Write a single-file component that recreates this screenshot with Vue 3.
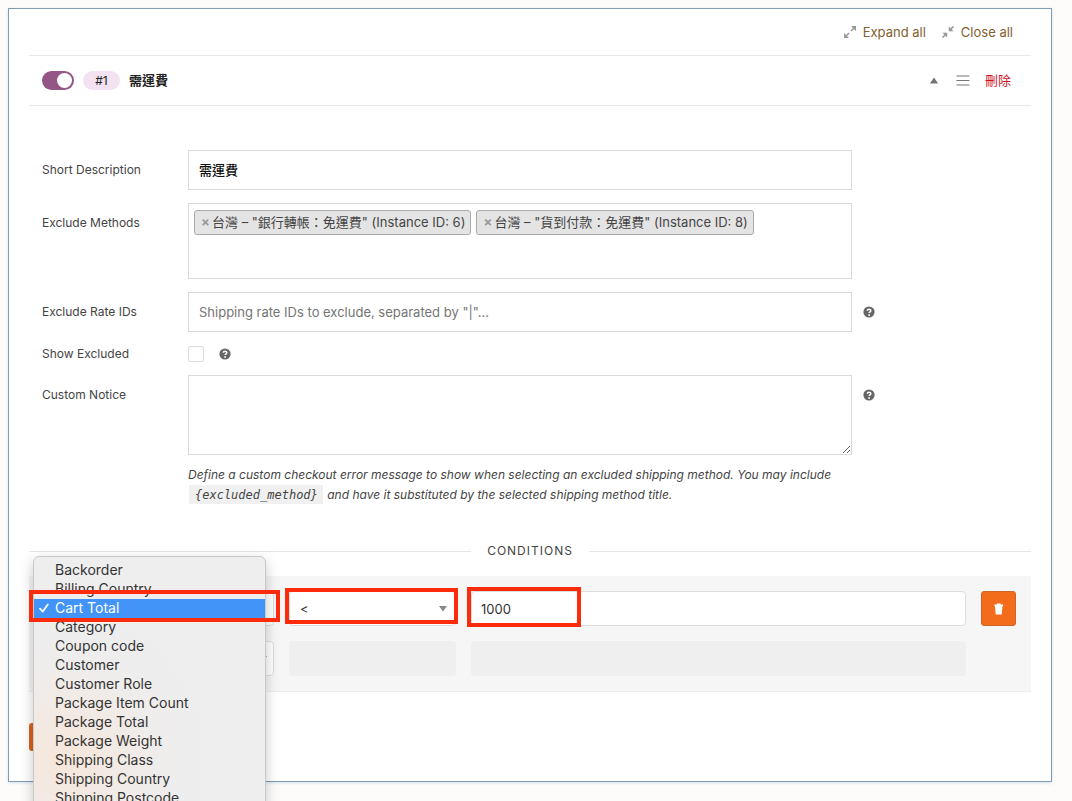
<script setup>
import { ref } from 'vue'

const enabled = ref(true)
const description = ref('需運費')
const rateIds = ref('')
const showExcluded = ref(false)
const notice = ref('')
const operator = ref('<')
const amount = ref('1000')
const selected = ref('Cart Total')

const methods = [
  '台灣 – "銀行轉帳：免運費" (Instance ID: 6)',
  '台灣 – "貨到付款：免運費" (Instance ID: 8)',
]

const options = [
  'Backorder', 'Billing Country', 'Cart Total', 'Category', 'Coupon code',
  'Customer', 'Customer Role', 'Package Item Count', 'Package Total',
  'Package Weight', 'Shipping Class', 'Shipping Country', 'Shipping Postcode',
]
</script>

<template>
  <div class="page">
    <main class="panel">
      <div class="toolbar">
        <a href="#" class="tool">
          <svg width="12" height="12" viewBox="0 0 12 12" aria-hidden="true">
            <path d="M7 0H12V5ZM0 7L5 12H0Z" fill="#999" />
            <path d="M10 2L7 5M2 10L5 7" stroke="#999" stroke-width="1.5" />
          </svg>
          <span>Expand all</span>
        </a>
        <a href="#" class="tool">
          <svg width="12" height="12" viewBox="0 0 12 12" aria-hidden="true">
            <path d="M6.8 .4V5.2H11.6ZM.4 6.8H5.2V11.6Z" fill="#999" />
            <path d="M8.4 3.6L11.6 .4M3.6 8.4L.4 11.6" stroke="#999" stroke-width="1.5" />
          </svg>
          <span>Close all</span>
        </a>
      </div>

      <header class="rule-head">
        <label class="switch">
          <input v-model="enabled" type="checkbox" aria-label="Enable rule" />
        </label>
        <span class="badge">#1</span>
        <h2 class="title">需運費</h2>
        <button class="icon-btn" type="button" aria-label="Collapse">
          <svg width="10" height="8" viewBox="0 0 10 8"><path d="M5 .4L9.2 6.4H.8Z" fill="#777" /></svg>
        </button>
        <button class="icon-btn handle" type="button" aria-label="Reorder">
          <svg width="14" height="12" viewBox="0 0 14 12"><path d="M.4 1H13.4M.4 5.5H13.4M.4 10H13.4" stroke="#777" stroke-width="1.2" /></svg>
        </button>
        <a href="#" class="delete">刪除</a>
      </header>

      <form class="fields" @submit.prevent>
        <div class="field">
          <label for="desc">Short Description</label>
          <input id="desc" v-model="description" class="text strong" type="text" />
        </div>
        <div class="field">
          <span id="methods-label" class="label">Exclude Methods</span>
          <ul class="chips" aria-labelledby="methods-label">
            <li v-for="m in methods" :key="m" class="chip">
              <button type="button" aria-label="Remove">×</button>{{ m }}
            </li>
          </ul>
        </div>
        <div class="field">
          <label for="rates">Exclude Rate IDs</label>
          <input id="rates" v-model="rateIds" class="text" type="text" placeholder="Shipping rate IDs to exclude, separated by &quot;|&quot;..." />
          <span class="help">
            <svg width="12" height="12" viewBox="0 0 12 12"><circle cx="6" cy="6" r="5.6" fill="#666" /><path d="M4.3 4.8C4.3 2.7 7.8 2.7 7.8 4.7C7.8 5.8 6.1 5.8 6.1 7.1" fill="none" stroke="#fff" stroke-width="1.5" /><circle cx="6.1" cy="9" r=".9" fill="#fff" /></svg>
          </span>
        </div>
        <div class="field compact">
          <label for="show">Show Excluded</label>
          <div class="check-line">
            <input id="show" v-model="showExcluded" class="check" type="checkbox" />
            <svg width="12" height="12" viewBox="0 0 12 12"><circle cx="6" cy="6" r="5.6" fill="#666" /><path d="M4.3 4.8C4.3 2.7 7.8 2.7 7.8 4.7C7.8 5.8 6.1 5.8 6.1 7.1" fill="none" stroke="#fff" stroke-width="1.5" /><circle cx="6.1" cy="9" r=".9" fill="#fff" /></svg>
          </div>
        </div>
        <div class="field">
          <label for="notice">Custom Notice</label>
          <div>
            <textarea id="notice" v-model="notice" class="area"></textarea>
            <p class="hint">
              Define a custom checkout error message to show when selecting an excluded shipping method. You may include
              <code>{excluded_method}</code> and have it substituted by the selected shipping method title.
            </p>
          </div>
          <span class="help">
            <svg width="12" height="12" viewBox="0 0 12 12"><circle cx="6" cy="6" r="5.6" fill="#666" /><path d="M4.3 4.8C4.3 2.7 7.8 2.7 7.8 4.7C7.8 5.8 6.1 5.8 6.1 7.1" fill="none" stroke="#fff" stroke-width="1.5" /><circle cx="6.1" cy="9" r=".9" fill="#fff" /></svg>
          </span>
        </div>
      </form>

      <h3 class="divider"><span>CONDITIONS</span></h3>

      <section class="conditions">
        <div class="cell">
          <div class="control"></div>
          <ul class="menu" role="listbox" aria-label="Condition">
            <li
              v-for="o in options"
              :key="o"
              role="option"
              :aria-selected="o === selected"
              :class="{ active: o === selected }"
              @click="selected = o"
            >
              <svg v-if="o === selected" width="10" height="10" viewBox="0 0 10 10"><path d="M1 5.6L3.8 8.6L8.8 1.4" fill="none" stroke="#fff" stroke-width="1.8" stroke-linecap="round" stroke-linejoin="round" /></svg>
              <span>{{ o }}</span>
            </li>
          </ul>
          <div class="mark mark-type"></div>
        </div>
        <div class="cell">
          <select v-model="operator" class="control" aria-label="Operator">
            <option value="<">&lt;</option>
            <option value=">">&gt;</option>
          </select>
          <svg class="caret" width="8" height="6" viewBox="0 0 8 6"><path d="M0 0H8L4 5.4Z" fill="#888" /></svg>
          <div class="mark mark-op"></div>
        </div>
        <div class="cell">
          <input v-model="amount" class="control" type="text" aria-label="Amount" />
          <div class="mark mark-value"></div>
        </div>
        <button class="trash" type="button" aria-label="Remove condition">
          <svg width="10" height="12" viewBox="0 0 10 12"><path d="M.4 1.6H2.8V.5H6.6V1.6H9V3H.4ZM.9 3H8.5L7.7 11.4H1.7Z" fill="#fff" /></svg>
        </button>

        <div class="cell">
          <select class="control" aria-label="New condition"><option></option></select>
          <svg class="caret caret-edge" width="8" height="6" viewBox="0 0 8 6"><path d="M0 0H8L4 5.4Z" fill="#888" /></svg>
        </div>
        <div class="blank"></div>
        <div class="blank"></div>
      </section>

      <button class="add" type="button" aria-label="Add"></button>
    </main>
  </div>
</template>

<style>
body {
  background: #fefcfb;
}
</style>

<style scoped>
.page {
  position: relative;
  min-height: 100vh;
  overflow: hidden;
  box-sizing: border-box;
  padding: 8px 20px 19px 8px;
  font-family: Inter, "Noto Sans CJK TC", sans-serif;
  font-size: 13px;
  line-height: 20px;
  color: #444;
}
.page *,
.page *::before,
.page *::after {
  box-sizing: border-box;
}
input,
textarea,
select,
button {
  font: inherit;
  margin: 0;
}
.panel {
  background: #fff;
  border: 1px solid #7f9db5;
  box-shadow: 0 1px 3px #d5e2ea;
  padding: 0 20px 30px;
}
.toolbar {
  display: flex;
  justify-content: flex-end;
  gap: 16px;
  height: 47px;
  align-items: center;
  padding-right: 18px;
  border-bottom: 1px solid #e8e8e8;
}
.tool {
  display: flex;
  align-items: center;
  gap: 7px;
  color: #82602f;
  text-decoration: none;
}
.rule-head {
  display: flex;
  align-items: center;
  height: 50px;
  padding: 0 20px 0 13px;
  border-bottom: 1px solid #e8e8e8;
}
.switch {
  display: flex;
}
.switch input {
  appearance: none;
  width: 32px;
  height: 19px;
  padding: 2px;
  border-radius: 10px;
  background: #935687;
  display: flex;
}
.switch input::before {
  content: "";
  width: 15px;
  height: 15px;
  border-radius: 50%;
  background: #fff;
}
.switch input:checked {
  justify-content: flex-end;
}
.badge {
  width: 37px;
  height: 19px;
  margin-left: 9px;
  border-radius: 10px;
  background: #f3e2f1;
  color: #222;
  font-size: 12px;
  line-height: 19px;
  text-align: center;
}
.title {
  margin: 0 auto 0 9px;
  padding-bottom: 2px;
  font-size: 13px;
  font-weight: 600;
  color: #222;
}
.icon-btn {
  display: flex;
  padding: 0;
  border: 0;
  background: none;
}
.handle {
  margin: 0 15px 0 17px;
}
.delete {
  padding-bottom: 2px;
  color: #d0141e;
  text-decoration: none;
}
.fields {
  display: grid;
  gap: 13px;
  padding: 44px 13px 0;
}
.field {
  display: grid;
  grid-template-columns: 146px minmax(0, 1fr) 166px;
  align-items: start;
}
.field > label,
.field > .label {
  padding-top: 10px;
  font-size: 12px;
}
.field.compact {
  align-items: center;
}
.field.compact > label {
  padding-top: 0;
  line-height: 17px;
}
.text,
.chips,
.area {
  display: block;
  width: 100%;
  border: 1px solid #d9d9d9;
  background: #fff;
}
.text {
  height: 40px;
  padding: 0 10px;
  color: #555;
}
.text::placeholder {
  color: #757575;
  opacity: 1;
}
.text.strong {
  padding-bottom: 2px;
  color: #111;
  font-weight: 500;
}
.chips {
  display: flex;
  flex-wrap: wrap;
  align-content: flex-start;
  gap: 5px;
  height: 76px;
  margin: 0;
  padding: 6px 5px;
  list-style: none;
}
.chip {
  display: flex;
  align-items: center;
  height: 25px;
  padding: 0 5px 1px 6px;
  border: 1px solid #aaa;
  border-radius: 3px;
  background: #e4e4e4;
  white-space: pre;
}
.chip button {
  width: 11px;
  padding: 0;
  border: 0;
  background: none;
  color: #999;
  font-weight: 700;
  text-align: left;
}
.area {
  height: 80px;
  resize: vertical;
}
.help {
  display: flex;
  padding: 14px 0 0 11px;
}
.check-line {
  display: flex;
  align-items: center;
  gap: 15px;
}
.check {
  appearance: none;
  width: 16px;
  height: 16px;
  border: 1px solid #ddd;
  border-radius: 2px;
  background: #fff;
}
.hint {
  margin: 10px 0 0;
  font-size: 12px;
  font-style: italic;
}
.hint code {
  padding: 3px 5px 2px 6px;
  margin: 0 1px;
  background: #f0f0f1;
  font-family: "DejaVu Sans Mono", monospace;
  font-size: 12px;
}
.divider {
  display: flex;
  align-items: center;
  gap: 16px;
  margin: 36px 0 15px;
  font-size: 12px;
  font-weight: 400;
  letter-spacing: 1px;
}
.divider::before,
.divider::after {
  content: "";
  flex: 1;
  height: 1px;
  background: #e6e6e6;
}
.conditions {
  display: grid;
  grid-template-columns: 230px 167px minmax(0, 1fr) 35px;
  gap: 15px;
  padding: 15px;
  border-bottom: 1px solid #eee;
  background: #f6f6f6;
}
.cell {
  position: relative;
  height: 35px;
}
.control {
  appearance: none;
  display: block;
  width: 100%;
  height: 35px;
  padding: 0 9px;
  border: 1px solid #ddd;
  border-radius: 4px;
  background: #fff;
  color: #333;
  font-size: 13px;
}
select.control {
  padding-left: 10px;
}
.caret {
  position: absolute;
  right: 9px;
  top: 15px;
}
.caret-edge {
  right: 7px;
}
.blank {
  height: 35px;
  border-radius: 4px;
  background: #efefef;
}
.trash {
  display: grid;
  place-items: center;
  height: 35px;
  padding: 0;
  border: 1px solid #cf6428;
  border-radius: 3px;
  background: #f26c1c;
}
.add {
  display: block;
  width: 90px;
  height: 28px;
  margin-top: 31px;
  border: 0;
  border-radius: 3px;
  background: #d9631f;
}
.menu {
  position: absolute;
  z-index: 2;
  left: -11px;
  top: -35px;
  width: 233px;
  margin: 0;
  padding: 4px 0;
  list-style: none;
  border: 1px solid #c9c9c9;
  border-radius: 6px;
  background: radial-gradient(circle at 30px 200px, #f6e6da, #efedec 90px, #eeeeef 150px);
  box-shadow: 0 5px 14px rgba(0, 0, 0, 0.22);
  color: #333;
  font-size: 14px;
  line-height: 17px;
}
.menu li {
  display: grid;
  grid-template-columns: 16px 1fr;
  align-items: start;
  height: 19px;
  padding-left: 5px;
  white-space: nowrap;
}
.menu li svg {
  margin-top: 4px;
}
.menu li span {
  grid-column: 2;
}
.menu .active {
  background: #4394f8;
  color: #fff;
}
.mark {
  position: absolute;
  z-index: 3;
  border: 4px solid #fc2b0c;
  pointer-events: none;
}
.mark-type {
  left: -15px;
  top: -1px;
  width: 251px;
  height: 32px;
}
.mark-op {
  left: -4px;
  top: -3px;
  width: 173px;
  height: 36px;
}
.mark-value {
  left: -4px;
  top: -4px;
  width: 114px;
  height: 40px;
}
</style>
